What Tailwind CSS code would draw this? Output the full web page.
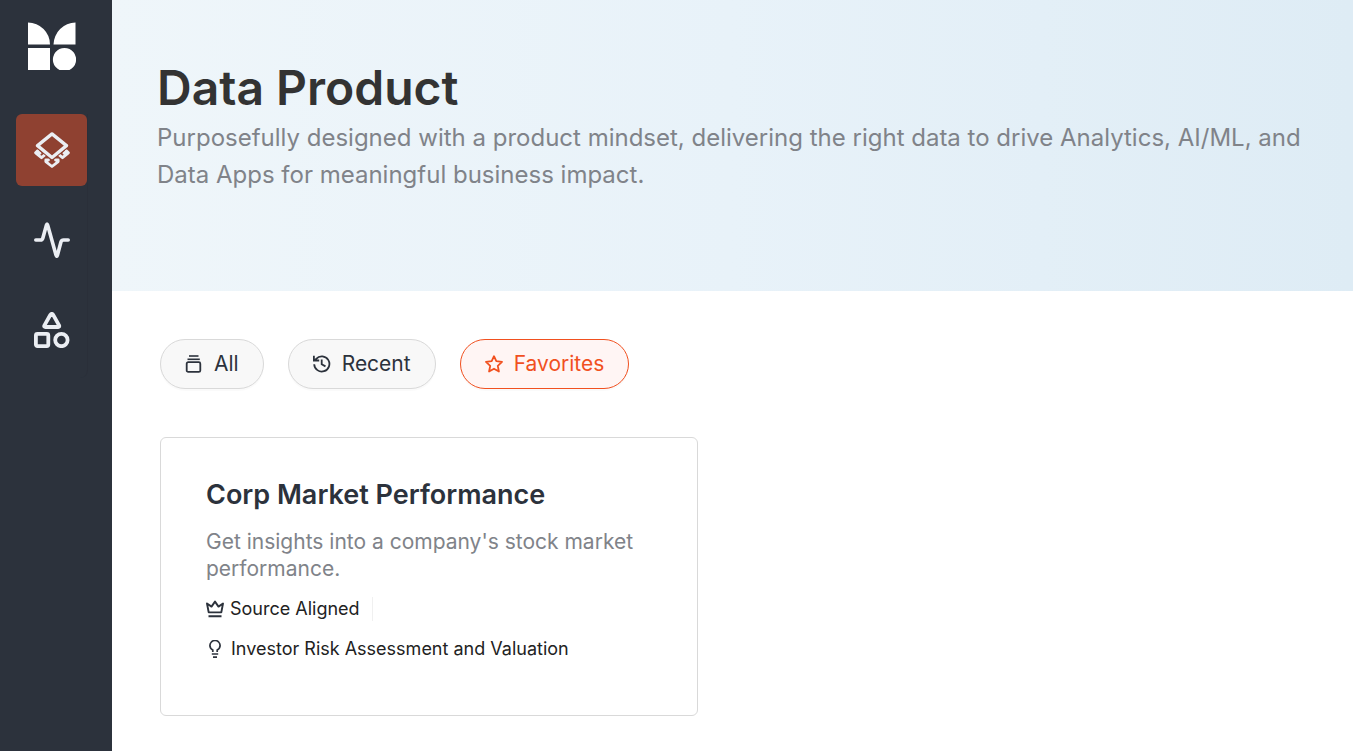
<!DOCTYPE html>
<html lang="en">
<head>
<meta charset="utf-8">
<title>Data Product</title>
<script src="https://cdn.jsdelivr.net/npm/@tailwindcss/browser@4"></script>
</head>
<body class="flex min-h-screen bg-white font-['Inter',sans-serif]">
<aside class="w-28 shrink-0 bg-[#2c323c] pl-4 pt-[22px]">
  <a href="#" aria-label="Home" class="block pl-3">
    <svg class="size-12" viewBox="0 0 48 48" fill="#fff"><path d="M0 .5A22 22 0 0 1 22 22.500H0zM47.500 .5V22.500H25.500A22.500 22.500 0 0 1 47.500 .5zM0 26H22V48H0z"/><path d="M31.500 48A11.600 11.600 0 1 1 41.500 48z"/></svg>
  </a>
  <nav class="mt-11 flex w-18 flex-col gap-[18px] rounded-br-lg border-r border-[#2a2f39] pb-3 text-[#ebeef3]">
    <a href="#" aria-label="Data products" class="flex h-[72px] items-center justify-center rounded-md bg-[#8f4131]">
      <svg class="size-9" viewBox="0 0 36 36" fill="none" stroke="currentColor" stroke-width="3.300" stroke-linejoin="round"><path stroke-width="2.800" stroke-linecap="round" d="M3.600 18.800 1.600 20.800 7.500 25.700 10.500 23.200M4 19.500 6 21.200M32.400 18.800 34.400 20.800 28.500 25.700 25.500 23.200M32 19.500 30 21.200M14.500 28H11.800V29.600L18 34.500 24.200 29.600V28H21.500"/><path stroke="#8f4131" stroke-width="5.400" d="M18 1.900 32.500 13.600 18 25.500 3.500 13.600z"/><path d="M18 1.900 32.500 13.600 18 25.500 3.500 13.600z"/></svg>
    </a>
    <a href="#" aria-label="Activity" class="flex h-[72px] items-center justify-center">
      <svg class="size-9" viewBox="0 0 36 36" fill="none" stroke="currentColor" stroke-width="3.600" stroke-linejoin="round" stroke-linecap="round"><path d="M1.800 18H6.500Q8.300 18 8.800 16.200L12.400 3.300Q13 .8 13.700 3.300L22 33Q22.800 35.500 23.500 33L27 19.800Q27.600 18 29.500 18H34.200"/></svg>
    </a>
    <a href="#" aria-label="Catalog" class="flex h-[72px] items-center justify-center">
      <svg class="size-9" viewBox="0 0 36 36" fill="none" stroke="currentColor" stroke-width="3.800" stroke-linejoin="round"><path d="M16.400 2.800Q17.800.9 19.200 2.800L25.200 13.600Q25.500 15 24.200 15H11.400Q9.800 15 10.300 13.600z"/><rect x="1.900" y="21.900" width="12.400" height="12.200" rx="1.500"/><circle cx="27.400" cy="28" r="6.200"/></svg>
    </a>
  </nav>
</aside>
<main class="min-w-0 flex-1">
  <header class="bg-linear-to-r from-[#eff6fa] via-[#e8f2f9] to-[#deecf5] px-[45px] pt-[60px] pb-[98px]">
    <h1 class="text-5xl leading-[56px] font-semibold text-[#333]">Data Product</h1>
    <p class="mt-[3px] text-2xl leading-[37px] text-[#808389]">Purposefully designed with a product mindset, delivering the right data to drive Analytics, AI/ML, and Data Apps for meaningful business impact.</p>
  </header>
  <div class="px-12 pt-12 pb-[35px]">
    <div class="flex gap-6 text-[21px] leading-7 text-[#2c323c]">
      <button class="flex h-[50px] items-center gap-[11px] rounded-full border border-[#d9d9d9] bg-[#f8f8f8] px-6 shadow-[0_2px_0_rgba(0,0,0,0.02)]">
        <svg class="size-[18px]" viewBox="0 0 18 18" fill="none" stroke="currentColor"><path stroke-width="1.600" d="M4 1H13.500"/><path stroke-width="1.600" d="M2.500 4.300H14.800"/><rect stroke-width="1.800" x="1.700" y="7.200" width="13.600" height="9.700" rx="1.500"/></svg>
        All</button>
      <button class="flex h-[50px] items-center gap-[11px] rounded-full border border-[#d9d9d9] bg-[#f8f8f8] px-6 shadow-[0_2px_0_rgba(0,0,0,0.02)]">
        <svg class="size-[18px]" viewBox="0 0 18 18" fill="none" stroke="currentColor" stroke-width="1.800"><path d="M1.200 9.200A7.600 7.600 0 1 0 3.200 3.800L1.500 5.600M8.700 4.500V9.300L12.500 11.400M.9.800V5.500H6.200"/></svg>
        Recent</button>
      <button class="flex h-[50px] items-center gap-[11px] rounded-full border border-[#f1501f] bg-[#fff5f4] px-6 text-[#f1501f] shadow-[0_2px_0_rgba(0,0,0,0.02)]">
        <svg class="size-[18px]" viewBox="0 0 18 18" fill="none" stroke="currentColor" stroke-width="1.800" stroke-linejoin="round"><path d="M9 1.200 11.300 6.200 17 6.900 12.800 10.800 13.900 16.500 9 13.700 4.100 16.500 5.200 10.800 1 6.900 6.700 6.200z"/></svg>
        Favorites</button>
    </div>
    <article class="mt-12 w-full max-w-[538px] rounded-md border border-[#d9d9d9] px-[45px] pt-10 pb-[54px]">
      <h2 class="text-[27px] leading-[34px] font-semibold text-[#2c323c]">Corp Market Performance</h2>
      <p class="mt-4 text-[21px] leading-[27px] text-[#808389]">Get insights into a company's stock market performance.</p>
      <div class="mt-[15px] flex items-center text-lg leading-6 text-[#222]">
        <svg class="mr-1.5 size-[18px] text-[#2c323c]" viewBox="0 0 18 18" fill="none" stroke="currentColor" stroke-width="1.900" stroke-linejoin="round"><path d="M2.700 12.400 1 3.500 5.500 6.600 9 1.600 12.500 6.600 17 3.500 15.300 12.400zM2.500 16.200H15.500"/></svg>
        <span class="border-r border-[#f0f0f0] pr-3">Source Aligned</span>
      </div>
      <div class="mt-4 flex items-center text-lg leading-6 text-[#222]">
        <svg class="mr-[7px] size-[18px] text-[#2c323c]" viewBox="0 0 18 18" fill="none" stroke="currentColor" stroke-width="1.700"><path d="M6.800 12V10Q3.900 8.500 3.900 5.600A5.100 5.100 0 0 1 14.100 5.600Q14.100 8.500 11.200 10V12M5.800 14H12.200M7 17.100H11"/></svg>
        Investor Risk Assessment and Valuation
      </div>
    </article>
  </div>
</main>
</body>
</html>
